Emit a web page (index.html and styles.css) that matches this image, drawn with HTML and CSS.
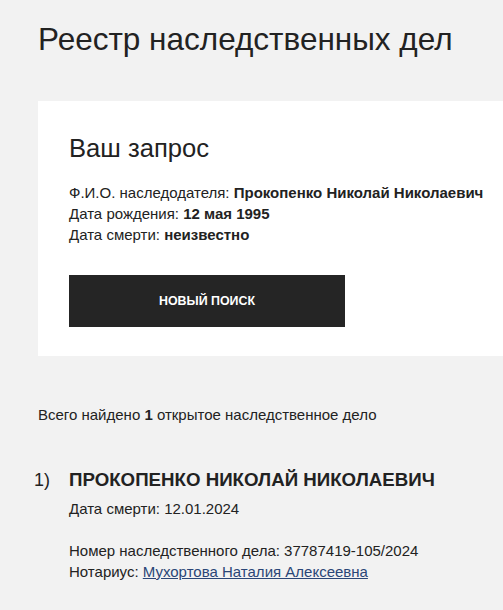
FILE: index.html
```html
<!DOCTYPE html>
<html lang="ru">
<head>
    <meta charset="UTF-8">
    <meta name="viewport" content="width=device-width, initial-scale=1.0">
    <title>Реестр наследственных дел</title>
    <link rel="stylesheet" href="styles.css">
</head>
<body>
    <div class="page">
        <h1 class="page-title">Реестр наследственных дел</h1>

        <div class="request-card">
            <h2>Ваш запрос</h2>
            <div class="request-info">
                <div>Ф.И.О. наследодателя: <b>Прокопенко Николай Николаевич</b></div>
                <div>Дата рождения: <b>12 мая 1995</b></div>
                <div>Дата смерти: <b>неизвестно</b></div>
            </div>
            <button class="btn-search">НОВЫЙ ПОИСК</button>
        </div>

        <p class="found">Всего найдено <b>1</b> открытое наследственное дело</p>

        <ol class="cases">
            <li class="case">
                <span class="case-num">1)</span>
                <div class="case-body">
                    <div class="case-name">ПРОКОПЕНКО НИКОЛАЙ НИКОЛАЕВИЧ</div>
                    <div class="case-line">Дата смерти: 12.01.2024</div>
                    <div class="case-meta">
                        <div>Номер наследственного дела: 37787419-105/2024</div>
                        <div>Нотариус: <a href="#">Мухортова Наталия Алексеевна</a></div>
                    </div>
                </div>
            </li>
        </ol>
    </div>
</body>
</html>
```

FILE: styles.css
```css
body { margin: 0; background-color: #f2f2f2; color: #222; font-family: "Liberation Sans", Arial, sans-serif; }
.page { padding: 0 0 0 38px; overflow: hidden; }
.page-title { margin: 0; padding: 21px 0 0; font-size: 31.5px; font-weight: normal; line-height: 36px; height: 101px; box-sizing: border-box; }
.request-card { background-color: #fff; padding: 33px 0 29px 31px; margin-right: -20px; }
.request-card h2 { margin: 0 0 20px; font-size: 25.6px; font-weight: normal; line-height: 28px; }
.request-info { font-size: 15px; line-height: 21px; margin-bottom: 30px; }
.btn-search { display: block; width: 276px; height: 52px; border: none; background-color: #252525; color: #fff; font-family: inherit; font-size: 12.4px; font-weight: bold; cursor: pointer; }
.found { margin: 50px 0 0; font-size: 15px; line-height: 18px; }
.cases { list-style: none; margin: 44px 0 0; padding: 0; }
.case { display: flex; }
.case-num { width: 35px; margin-left: -4px; font-size: 18px; line-height: 24px; }
.case-body { font-size: 15px; }
.case-name { font-size: 18.7px; font-weight: bold; line-height: 24px; margin-bottom: 6px; }
.case-line { line-height: 21px; margin-bottom: 21px; }
.case-meta { line-height: 21px; }
.case-meta a { color: #2a4677; }
```
